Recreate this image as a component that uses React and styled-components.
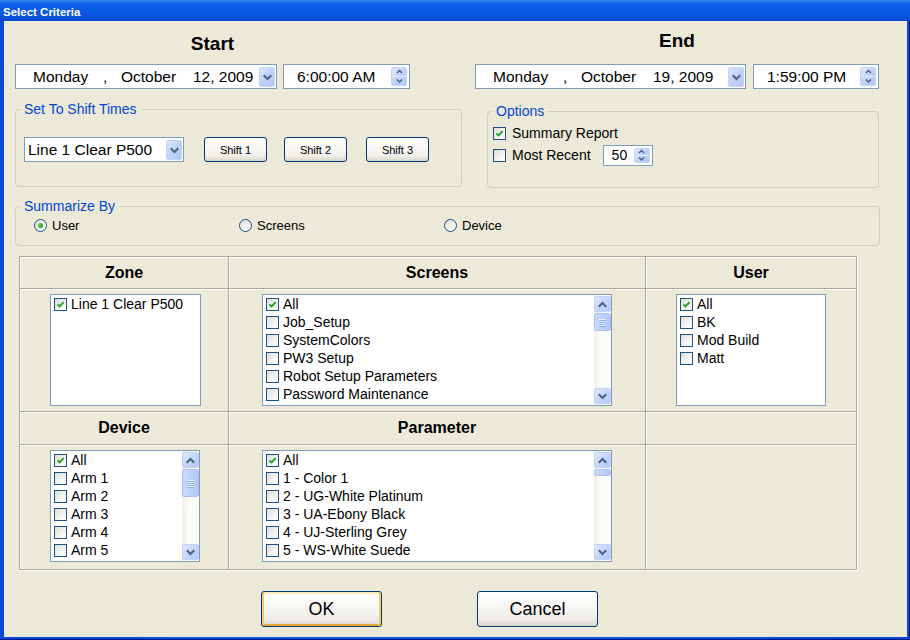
import React from 'react';
import styled, { createGlobalStyle } from 'styled-components';

const FONT = '"Liberation Sans", Arial, sans-serif';

const GlobalStyle = createGlobalStyle`
  html, body { margin: 0; padding: 0; background: #ECE9D8; }
  body { font-family: ${FONT}; }
  * { box-sizing: border-box; }
`;

const Window = styled.div`
  width: 910px;
  height: 640px;
  display: flex;
  flex-direction: column;
  overflow: hidden;
`;

const TitleBar = styled.div`
  height: 21px;
  flex: none;
  display: flex;
  align-items: center;
  padding: 2px 0 0 3px;
  background: linear-gradient(180deg, #3F8CF3 0%, #1563E8 3px, #0A5BE4 45%, #0653DC 80%, #0A4CD2 100%);
  color: #fff;
  font: bold 11.5px ${FONT};
`;

const Frame = styled.div`
  flex: 1;
  display: flex;
  padding: 0 3px 3px 4px;
  background: linear-gradient(90deg, #0A4AD4 0%, #0C55E0 50%, #0A4AD4 100%);
  box-shadow: inset -1px -1px 0 #00188F;
`;

const Body = styled.div`
  flex: 1;
  display: flex;
  flex-direction: column;
  padding-left: 11px;
  background: #ECE9D8;
  color: #000;
`;

const TopRow = styled.div`
  display: flex;
  align-items: flex-start;
`;

const Column = styled.div`
  display: flex;
  flex-direction: column;
  align-items: flex-start;
  margin-left: ${p => p.$ml || 0}px;
`;

const DateBlock = styled.div`
  display: flex;
  flex-direction: column;
`;

const Heading = styled.div`
  font: bold 19px/22px ${FONT};
  text-align: center;
  margin: ${p => p.$top}px 0 ${p => p.$bottom}px;
`;

const PickerRow = styled.div`
  display: flex;
  gap: ${p => p.$gap}px;
`;

const Field = styled.div`
  width: ${p => p.$w}px;
  height: ${p => p.$h || 25}px;
  margin-left: ${p => p.$ml || 0}px;
  background: #fff;
  border: 1px solid #7F9DB9;
  display: flex;
  align-items: center;
  font: ${p => p.$fs || 15.5}px ${FONT};
  white-space: nowrap;
`;

const FieldText = styled.div`
  flex: 1;
  display: flex;
  padding-left: ${p => p.$pl}px;
  overflow: hidden;
`;

const Part = styled.span`
  display: inline-block;
  width: ${p => p.$w}px;
`;

const DropBtn = styled.span`
  width: 16px;
  align-self: stretch;
  margin: 2px 1px 1px 0;
  border: 1px solid #C3D3F7;
  border-radius: 2px;
  background: linear-gradient(135deg, #DCE6FE 0%, #C3D4FB 45%, #B1C6F5 100%);
  display: flex;
  align-items: center;
  justify-content: center;
`;

const Spin = styled.span`
  width: 16px;
  align-self: stretch;
  margin: 2px 2px 2px 0;
  display: flex;
  flex-direction: column;
  border: 1px solid #C3D3F7;
  border-radius: 2px;
  background: linear-gradient(135deg, #DCE6FE 0%, #C3D4FB 45%, #B1C6F5 100%);
`;

const SpinHalf = styled.span`
  flex: 1;
  display: flex;
  align-items: center;
  justify-content: center;
  border-top: ${p => (p.$lower ? '1px solid #E6EDFD' : 'none')};
`;

const Group = styled.div`
  position: relative;
  width: ${p => p.$w}px;
  height: ${p => p.$h}px;
  margin-top: ${p => p.$mt}px;
  margin-left: ${p => p.$ml || 0}px;
  padding: ${p => p.$pad};
  border: 1px solid #D0D0BF;
  border-radius: 4px;
`;

const Legend = styled.span`
  position: absolute;
  left: 4px;
  top: -9px;
  padding: 0 4px;
  background: #ECE9D8;
  color: #0046D5;
  font: 14px/16px ${FONT};
  white-space: nowrap;
`;

const ShiftRow = styled.div`
  display: flex;
  align-items: center;
`;

const Button = styled.button`
  width: ${p => p.$w}px;
  height: ${p => p.$h}px;
  margin-left: ${p => p.$ml || 0}px;
  padding: 0;
  border: 1px solid #003C74;
  border-radius: 3px;
  background: linear-gradient(180deg, #FFFFFF 0%, #F7F6F2 45%, #EEEDE7 80%, #D9D5CA 100%);
  font: ${p => p.$fs}px ${FONT};
  color: #000;
  cursor: default;
  box-shadow: ${p =>
    p.$focus
      ? 'inset 2px 0 0 #F7C96C, inset -2px 0 0 #F7C96C, inset 0 -2px 0 #E8A638, inset 0 2px 0 #FFEBC0'
      : 'none'};
`;

const OptionList = styled.div`
  display: flex;
  flex-direction: column;
`;

const OptionRow = styled.div`
  height: 22px;
  display: flex;
  align-items: center;
  font: 14px ${FONT};
`;

const Label = styled.span`
  margin-left: ${p => p.$ml || 6}px;
  white-space: nowrap;
`;

const CheckBox = styled.span`
  width: 13px;
  height: 13px;
  flex: none;
  border: 1px solid #1C5180;
  background: linear-gradient(135deg, #DCDCD7 0%, #F2F2EE 55%, #FFFFFF 100%);
  display: inline-flex;
  align-items: center;
  justify-content: center;
`;

const RadioRow = styled.div`
  display: flex;
  height: 20px;
  align-items: center;
`;

const RadioItem = styled.div`
  width: 205px;
  display: flex;
  align-items: center;
  font: 13px ${FONT};
`;

const RadioCircle = styled.span`
  width: 13px;
  height: 13px;
  flex: none;
  border-radius: 50%;
  border: 1px solid #1C5180;
  background: linear-gradient(135deg, #DCDCD7 0%, #F4F4F0 60%, #FFFFFF 100%);
  display: inline-flex;
  align-items: center;
  justify-content: center;
  &::after {
    content: '';
    width: 5px;
    height: 5px;
    border-radius: 50%;
    background: ${p => (p.$on ? 'radial-gradient(circle at 35% 35%, #62DE5E 0%, #22A222 70%, #1A8A1A 100%)' : 'transparent')};
  }
`;

const Table = styled.div`
  display: grid;
  grid-template-columns: 208px 416px 210px;
  grid-template-rows: 31px 122px 32px 124px;
  gap: 1px;
  padding: 1px;
  width: 838px;
  margin: 10px 0 0 4px;
  background: #ACA899;
  box-shadow: 1px 1px 0 #fff;
`;

const HeadCell = styled.div`
  background: #ECE9D8;
  box-shadow: inset 1px 1px 0 #fff;
  display: flex;
  align-items: center;
  justify-content: center;
  font: bold 16px ${FONT};
`;

const BodyCell = styled.div`
  background: #ECE9D8;
  box-shadow: inset 1px 1px 0 #fff;
  display: flex;
  align-items: flex-start;
  justify-content: center;
  padding: 5px 0 0 ${p => p.$pl || 0}px;
`;

const ListBox = styled.div`
  width: ${p => p.$w}px;
  height: 112px;
  background: #fff;
  border: 1px solid #7F9DB9;
  display: flex;
`;

const ListItems = styled.div`
  flex: 1;
  padding: 0 0 0 3px;
  overflow: hidden;
`;

const Item = styled.div`
  height: 18px;
  display: flex;
  align-items: center;
  gap: 4px;
  font: 14px ${FONT};
  white-space: nowrap;
`;

const ScrollBar = styled.div`
  width: 17px;
  flex: none;
  display: flex;
  flex-direction: column;
  padding: 1px 0;
  background: linear-gradient(90deg, #F1EFE8 0%, #FBFBF8 40%, #FEFEFC 100%);
`;

const ScrollBtn = styled.div`
  height: 16px;
  flex: none;
  border: 1px solid #C0D0F6;
  border-radius: 2px;
  background: linear-gradient(135deg, #E1E9FE 0%, #C6D6FC 50%, #B4C8F6 100%);
  display: flex;
  align-items: center;
  justify-content: center;
`;

const Thumb = styled.div`
  height: ${p => p.$h}px;
  margin-top: 1px;
  flex: none;
  border: 1px solid #ADC2F2;
  border-radius: 2px;
  background: linear-gradient(90deg, #C9D8FC 0%, #BDD0FB 50%, #B2C7F6 100%);
  display: flex;
  flex-direction: column;
  align-items: center;
  justify-content: center;
  gap: 1px;
`;

const Grip = styled.span`
  width: 7px;
  height: 1px;
  background: #EEF3FE;
  box-shadow: 0 1px 0 #8DAEF0;
`;

const Track = styled.div`
  flex: 1;
`;

const ButtonRow = styled.div`
  display: flex;
  margin: 21px 0 0 246px;
  gap: 95px;
`;

function Chevron({ dir = 'down', size = 9, color = '#4D6185', w = 2 }) {
  const d = dir === 'down' ? 'M1.5 3 L4.5 6 L7.5 3' : 'M1.5 6 L4.5 3 L7.5 6';
  return (
    <svg width={size} height={size} viewBox="0 0 9 9">
      <path d={d} fill="none" stroke={color} strokeWidth={w} strokeLinecap="square" />
    </svg>
  );
}

function SmallChevron({ dir }) {
  const d = dir === 'down' ? 'M1 1.5 L3.5 4 L6 1.5' : 'M1 4 L3.5 1.5 L6 4';
  return (
    <svg width="7" height="6" viewBox="0 0 7 6">
      <path d={d} fill="none" stroke="#4D6185" strokeWidth="1.5" />
    </svg>
  );
}

function Check({ checked }) {
  return (
    <CheckBox>
      {checked && (
        <svg width="9" height="9" viewBox="0 0 9 9">
          <path d="M1.5 4.3 L3.6 6.4 L7.6 2.2" fill="none" stroke="#21A121" strokeWidth="1.9" />
        </svg>
      )}
    </CheckBox>
  );
}

function Spinner() {
  return (
    <Spin>
      <SpinHalf><SmallChevron dir="up" /></SpinHalf>
      <SpinHalf $lower><SmallChevron dir="down" /></SpinHalf>
    </Spin>
  );
}

function DateField({ w, date }) {
  return (
    <Field $w={w}>
      <FieldText $pl={17}>
        <Part $w={70}>Monday</Part>
        <Part $w={18}>,</Part>
        <Part $w={72}>October</Part>
        <span>{date}</span>
      </FieldText>
      <DropBtn><Chevron /></DropBtn>
    </Field>
  );
}

function TimeField({ w, time }) {
  return (
    <Field $w={w}>
      <FieldText $pl={13}>{time}</FieldText>
      <Spinner />
    </Field>
  );
}

function List({ w, items, thumb }) {
  return (
    <ListBox $w={w}>
      <ListItems>
        {items.map((t, i) => (
          <Item key={t}>
            <Check checked={i === 0} />
            <span>{t}</span>
          </Item>
        ))}
      </ListItems>
      {thumb && (
        <ScrollBar>
          <ScrollBtn><Chevron dir="up" /></ScrollBtn>
          <Thumb $h={thumb}>
            {thumb > 12 && (
              <>
                <Grip />
                <Grip />
                <Grip />
                <Grip />
              </>
            )}
          </Thumb>
          <Track />
          <ScrollBtn><Chevron dir="down" /></ScrollBtn>
        </ScrollBar>
      )}
    </ListBox>
  );
}

const screens = ['All', 'Job_Setup', 'SystemColors', 'PW3 Setup', 'Robot Setup Parameters', 'Password Maintenance'];
const users = ['All', 'BK', 'Mod Build', 'Matt'];
const devices = ['All', 'Arm 1', 'Arm 2', 'Arm 3', 'Arm 4', 'Arm 5'];
const params = ['All', '1 - Color 1', '2 - UG-White Platinum', '3 - UA-Ebony Black', '4 - UJ-Sterling Grey', '5 - WS-White Suede'];

export default function App() {
  return (
    <>
      <GlobalStyle />
      <Window>
        <TitleBar>Select Criteria</TitleBar>
        <Frame>
          <Body>
            <TopRow>
              <Column>
                <DateBlock>
                  <Heading $top={12} $bottom={9}>Start</Heading>
                  <PickerRow $gap={6}>
                    <DateField w={262} date="12, 2009" />
                    <TimeField w={127} time="6:00:00 AM" />
                  </PickerRow>
                </DateBlock>
                <Group $w={447} $h={78} $mt={20} $pad="27px 0 0 8px">
                  <Legend>Set To Shift Times</Legend>
                  <ShiftRow>
                    <Field $w={160} $h={25}>
                      <FieldText $pl={3}>Line 1 Clear P500</FieldText>
                      <DropBtn><Chevron /></DropBtn>
                    </Field>
                    <Button $w={63} $h={25} $fs={11} $ml={20}>Shift 1</Button>
                    <Button $w={63} $h={25} $fs={11} $ml={17}>Shift 2</Button>
                    <Button $w={63} $h={25} $fs={11} $ml={19}>Shift 3</Button>
                  </ShiftRow>
                </Group>
              </Column>
              <Column $ml={13}>
                <DateBlock>
                  <Heading $top={9} $bottom={12}>End</Heading>
                  <PickerRow $gap={7}>
                    <DateField w={271} date="19, 2009" />
                    <TimeField w={126} time="1:59:00 PM" />
                  </PickerRow>
                </DateBlock>
                <Group $w={392} $h={77} $mt={22} $ml={12} $pad="10px 0 0 5px">
                  <Legend>Options</Legend>
                  <OptionList>
                    <OptionRow>
                      <Check checked />
                      <Label>Summary Report</Label>
                    </OptionRow>
                    <OptionRow>
                      <Check />
                      <Label>Most Recent</Label>
                      <Field $w={50} $h={21} $fs={14} $ml={12}>
                        <FieldText $pl={8}>50</FieldText>
                        <Spinner />
                      </Field>
                    </OptionRow>
                  </OptionList>
                </Group>
              </Column>
            </TopRow>

            <Group $w={865} $h={40} $mt={18} $pad="8px 0 0 18px">
              <Legend>Summarize By</Legend>
              <RadioRow>
                <RadioItem><RadioCircle $on /><Label $ml={5}>User</Label></RadioItem>
                <RadioItem><RadioCircle /><Label $ml={5}>Screens</Label></RadioItem>
                <RadioItem><RadioCircle /><Label $ml={5}>Device</Label></RadioItem>
              </RadioRow>
            </Group>

            <Table>
              <HeadCell>Zone</HeadCell>
              <HeadCell>Screens</HeadCell>
              <HeadCell>User</HeadCell>
              <BodyCell $pl={3}><List w={151} items={['Line 1 Clear P500']} /></BodyCell>
              <BodyCell><List w={350} items={screens} thumb={18} /></BodyCell>
              <BodyCell><List w={150} items={users} /></BodyCell>
              <HeadCell>Device</HeadCell>
              <HeadCell>Parameter</HeadCell>
              <HeadCell />
              <BodyCell $pl={2}><List w={150} items={devices} thumb={28} /></BodyCell>
              <BodyCell><List w={350} items={params} thumb={7} /></BodyCell>
              <BodyCell />
            </Table>

            <ButtonRow>
              <Button $w={121} $h={36} $fs={18} $focus>OK</Button>
              <Button $w={121} $h={36} $fs={18}>Cancel</Button>
            </ButtonRow>
          </Body>
        </Frame>
      </Window>
    </>
  );
}
